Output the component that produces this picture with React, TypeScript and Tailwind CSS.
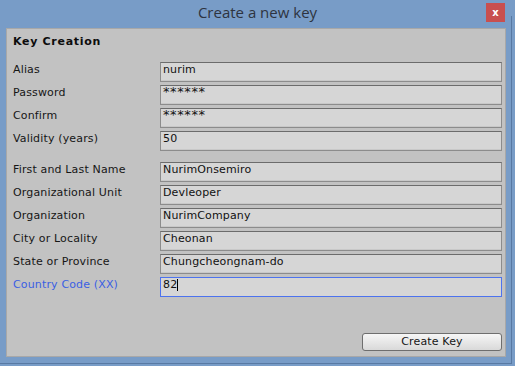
import React from "react";

type Row = { label: string; value: string; secret?: boolean; focused?: boolean };

const keyRows: Row[] = [
  { label: "Alias", value: "nurim" },
  { label: "Password", value: "******", secret: true },
  { label: "Confirm", value: "******", secret: true },
  { label: "Validity (years)", value: "50" },
];

const ownerRows: Row[] = [
  { label: "First and Last Name", value: "NurimOnsemiro" },
  { label: "Organizational Unit", value: "Devleoper" },
  { label: "Organization", value: "NurimCompany" },
  { label: "City or Locality", value: "Cheonan" },
  { label: "State or Province", value: "Chungcheongnam-do" },
  { label: "Country Code (XX)", value: "82", focused: true },
];

function Field({ row }: { row: Row }) {
  return (
    <div className="flex h-[20px] items-start">
      <span
        className={
          "w-[153px] pl-[6px] text-[11px] leading-[16px] tracking-[0.15px] " +
          (row.focused ? "text-[#3a5fe2]" : "text-[#161616]")
        }
      >
        {row.label}
      </span>
      <div
        className={
          "flex h-[20px] w-[342px] items-start border bg-[#d6d6d6] pl-[2px] text-[11px] tracking-[0.15px] text-[#111] " +
          (row.focused
            ? "border-[#4d73ee]"
            : "border-[#8c8c8c] border-t-[#6c6c6c] shadow-[inset_0_-1px_0_#c8c8c8]")
        }
      >
        {row.secret ? (
          <span className="text-[13px] leading-[12px] tracking-[0.6px]">{row.value}</span>
        ) : (
          <span className="leading-[14px]">{row.value}</span>
        )}
        {row.focused && <span className="mt-[1px] h-[12px] w-px bg-black" />}
      </div>
    </div>
  );
}

export default function App() {
  return (
    <div
      className="flex h-[366px] w-[515px] flex-col bg-[#789cc7]"
      style={{ fontFamily: '"DejaVu Sans", Verdana, sans-serif' }}
    >
      <div className="flex flex-1">
        <div className="flex w-[511px] flex-col">
          {/* title bar */}
          <div className="relative h-[28px] shrink-0">
            <div
              className="pl-[4px] pt-[2px] text-center text-[15px] leading-[20px] text-[#2e3440]"
              style={{ fontFamily: '"Open Sans", "Noto Sans", sans-serif' }}
            >
              Create a new key
            </div>
            <div className="absolute left-[486px] top-[3px] flex h-[19px] w-[19px] items-center justify-center bg-[#c84f4f] text-[10px] font-bold leading-none text-white">
              x
            </div>
          </div>

          {/* panel */}
          <div className="ml-[6px] flex h-[329px] w-[500px] flex-col border border-[#a8a8a8] bg-[#c2c2c2] pt-[5px]">
            <div className="pl-[6px] text-[11px] font-bold leading-[16px] tracking-[0.7px] text-[#0c0c0c]">
              Key Creation
            </div>

            <div className="mt-[12px] flex flex-col gap-[3px]">
              {keyRows.map((r) => (
                <Field key={r.label} row={r} />
              ))}
            </div>

            <div className="mt-[11px] flex flex-col gap-[3px]">
              {ownerRows.map((r) => (
                <Field key={r.label} row={r} />
              ))}
            </div>

            <div className="mt-[36px] flex justify-end pr-[3px]">
              <button className="h-[18px] w-[140px] rounded-[3px] border border-[#6e6e6e] bg-gradient-to-b from-[#f6f6f6] to-[#d9d9d9] text-[11px] leading-[16px] tracking-[0.15px] text-[#161616]">
                Create Key
              </button>
            </div>
          </div>
        </div>
        <div className="mt-[16px] w-px bg-[#5879a3]" />
      </div>
      <div className="h-px w-[512px] bg-[#5879a3]" />
      <div className="h-[2px]" />
    </div>
  );
}
